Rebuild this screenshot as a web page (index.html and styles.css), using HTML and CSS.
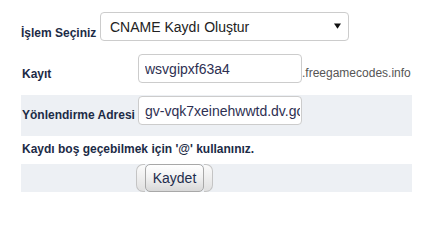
FILE: index.html
```html
<!DOCTYPE html>
<html lang="tr">
<head>
<meta charset="utf-8">
<title>CNAME Kaydı</title>
<link rel="stylesheet" href="styles.css">
</head>
<body>
<div class="form">
  <div class="choose">
    <label class="lbl choose-lbl">İşlem Seçiniz</label>
    <span class="select-wrap">
      <select class="select"><option>CNAME Kaydı Oluştur</option></select>
      <svg class="caret" width="8" height="6" viewBox="0 0 8 6"><path d="M0 0H8L4 6Z" fill="#111"/></svg>
    </span>
  </div>
  <div class="grid">
    <div class="row row-kayit">
      <div class="lbl cell-l">Kayıt</div>
      <div class="cell-f"><input class="inp" type="text" value="wsvgipxf63a4"><span class="suffix">.freegamecodes.info</span></div>
    </div>
    <div class="row alt row-adres">
      <div class="lbl cell-l">Yönlendirme Adresi</div>
      <div class="cell-f"><input class="inp" type="text" value="gv-vqk7xeinehwwtd.dv.googlehosted.com"></div>
    </div>
    <div class="row row-note">
      <div class="lbl note">Kaydı boş geçebilmek için '@' kullanınız.</div>
    </div>
    <div class="row alt row-btn">
      <div class="cell-l"></div>
      <div class="cell-b">
        <span class="btn">
          <span class="cap cap-l"></span>
          <button class="btn-main" type="button">Kaydet</button>
          <span class="cap cap-r"></span>
        </span>
      </div>
    </div>
  </div>
</div>
</body>
</html>
```

FILE: styles.css
```css
html, body {
  margin: 0;
  padding: 0;
  background: #ffffff;
}
body {
  font-family: "Liberation Sans", Arial, sans-serif;
}
.form {
  padding: 12px 0 0 21px;
  width: 391px;
}
.lbl {
  font-size: 12px;
  font-weight: bold;
  line-height: 14px;
  color: #1c2b46;
}
.choose {
  display: flex;
  align-items: flex-start;
  height: 29px;
  margin-bottom: 6px;
}
.choose-lbl {
  width: 79px;
  padding-top: 14px;
}
.select-wrap {
  position: relative;
  display: block;
  width: 249px;
  height: 29px;
}
.select {
  appearance: none;
  -webkit-appearance: none;
  box-sizing: border-box;
  width: 249px;
  height: 29px;
  margin: 0;
  padding: 0 0 0 9px;
  border: 1px solid #cccccc;
  border-radius: 4px;
  background: #ffffff;
  font-family: "Liberation Sans", Arial, sans-serif;
  font-size: 14px;
  color: #222222;
  outline: none;
}
.caret {
  position: absolute;
  top: 11px;
  right: 8px;
  width: 7px;
  height: 6px;
  pointer-events: none;
}
.grid {
  display: flex;
  flex-direction: column;
}
.row {
  display: grid;
  grid-template-columns: 115px 276px;
}
.alt {
  background: #edf0f4;
}
.cell-l {
  padding-left: 1px;
}
.cell-f {
  display: flex;
  align-items: flex-start;
}
.row-kayit {
  height: 48px;
}
.row-kayit .cell-l {
  padding-top: 20px;
}
.row-kayit .cell-f {
  padding-top: 7px;
}
.row-adres {
  height: 41px;
}
.row-adres .cell-l {
  padding-top: 13px;
}
.row-adres .cell-f {
  padding-top: 1px;
}
.inp {
  box-sizing: border-box;
  width: 164px;
  height: 29px;
  margin: 0 0 0 2px;
  padding: 0 1px 0 6px;
  border: 1px solid #cccccc;
  border-radius: 4px;
  background: #ffffff;
  font-family: "Liberation Sans", Arial, sans-serif;
  font-size: 14px;
  color: #2e3052;
  outline: none;
}
.suffix {
  margin-top: 12px;
  font-size: 12px;
  line-height: 14px;
  color: #555555;
}
.row-note {
  height: 28px;
}
.note {
  grid-column: 1 / -1;
  padding: 6px 0 0 1px;
}
.row-btn {
  height: 28px;
}
.cell-b {
  display: flex;
}
.btn {
  display: inline-flex;
  height: 28px;
}
.cap {
  box-sizing: border-box;
  width: 9px;
  height: 28px;
  border: 1px solid #c4c4c4;
  background: linear-gradient(#fbfbfb, #e0e0e0);
}
.cap-l {
  border-right: none;
  border-radius: 7px 0 0 7px;
}
.cap-r {
  border-left: none;
  border-radius: 0 7px 7px 0;
}
.btn-main {
  box-sizing: border-box;
  width: 59px;
  height: 28px;
  margin: 0;
  padding: 0;
  border: 1px solid #a8a8a8;
  border-radius: 5px;
  background: linear-gradient(#ffffff 0%, #f2f2f2 45%, #d8d8d8 100%);
  font-family: "Liberation Sans", Arial, sans-serif;
  font-size: 14px;
  color: #1e2d4d;
}
```
